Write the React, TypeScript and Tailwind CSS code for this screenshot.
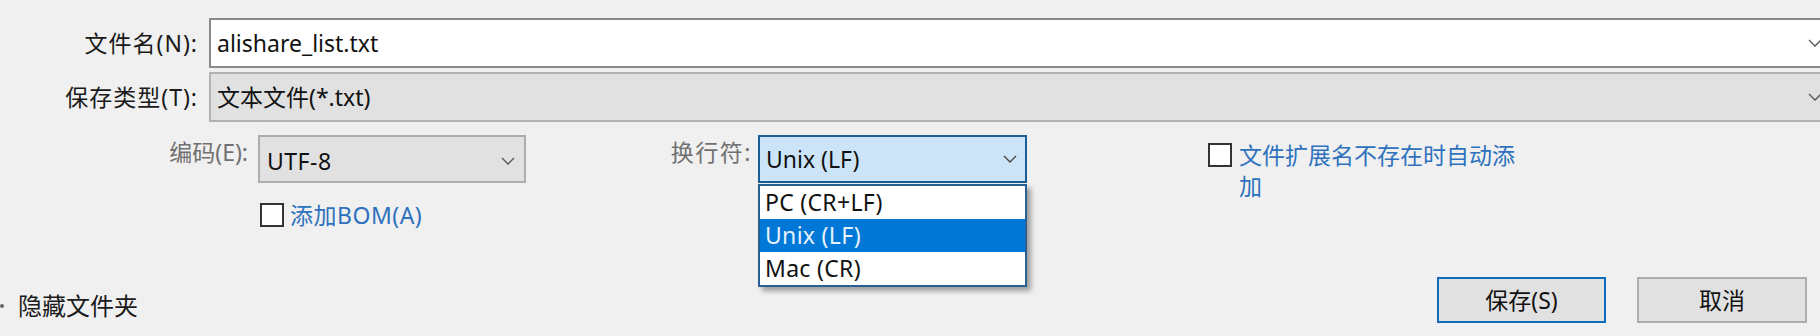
import React from "react";

const font = "font-['Noto_Sans','Noto_Sans_CJK_SC',sans-serif]";

function Chevron({ className = "" }: { className?: string }) {
  return (
    <svg viewBox="0 0 14 8" className={`w-[14px] h-[8px] shrink-0 ${className}`} fill="none" stroke="currentColor" strokeWidth={1.3}>
      <path d="M1 1l6 6 6-6" />
    </svg>
  );
}

function Checkbox() {
  return <span className="w-[24px] h-[24px] shrink-0 border-2 border-[#333] bg-white" />;
}

const options = ["PC (CR+LF)", "Unix (LF)", "Mac (CR)"];

export default function App() {
  return (
    <div className={`w-[1820px] h-[336px] overflow-hidden bg-[#f0f0f0] text-[23px] text-black ${font} flex flex-col pt-[18px]`}>
      {/* file name */}
      <div className="flex items-center h-[50px]">
        <span className="w-[198px] text-right text-[#1a1a1a] tracking-[1px]">文件名(N):</span>
        <div className="ml-[11px] flex-1 -mr-[20px] h-full bg-white border-2 border-[#8a8a8a] flex items-center pl-[6px] text-[#111]">
          alishare_list.txt
          <Chevron className="ml-auto mr-[16px] text-[#555]" />
        </div>
      </div>

      {/* file type */}
      <div className="flex items-center h-[50px] mt-[4px]">
        <span className="w-[198px] text-right text-[#1a1a1a] tracking-[1px]">保存类型(T):</span>
        <div className="ml-[11px] flex-1 -mr-[20px] h-full bg-[#e1e1e1] border-2 border-[#b2b2b2] flex items-center pl-[6px] text-[#111]">
          文本文件(*.txt)
          <Chevron className="ml-auto mr-[16px] text-[#555]" />
        </div>
      </div>

      {/* encoding / line ending / extension */}
      <div className="flex items-start h-[48px] mt-[13px]">
        <span className="w-[248px] text-right text-[#707070] leading-[30px] pt-[2px]">编码(E):</span>
        <div className="ml-[10px] w-[268px] h-full bg-[#e1e1e1] border-2 border-[#adadad] flex items-center pl-[7px] pt-[4px] text-[#111] tracking-[0.5px]">
          UTF-8
          <Chevron className="ml-auto mr-[9px] text-[#555]" />
        </div>
        <span className="w-[226px] text-right text-[#707070] leading-[30px] pt-[2px] tracking-[1.5px]">换行符:</span>
        <div className="ml-[6px] w-[269px] h-full relative">
          <div className="h-full bg-[#cce4f7] border-2 border-[#1c5d96] flex items-center pl-[6px] text-[#111]">
            Unix (LF)
            <Chevron className="ml-auto mr-[8px] text-[#444]" />
          </div>
          <ul className="absolute left-0 top-[49px] w-full bg-white border-2 border-[#2a5f93] shadow-[4px_4px_5px_rgba(0,0,0,0.35)] z-10">
            {options.map((o) => (
              <li
                key={o}
                className={`h-[33px] flex items-center pl-[5px] tracking-[0.3px] ${o === "Unix (LF)" ? "bg-[#0078d7] text-[#e8f2fb]" : "text-[#111]"}`}
              >
                {o}
              </li>
            ))}
          </ul>
        </div>
        <div className="ml-[181px] mt-[8px] flex items-start gap-[7px]">
          <Checkbox />
          <span className="leading-[31px] text-[#2e72bd] -mt-[3px]">
            文件扩展名不存在时自动添
            <br />加
          </span>
        </div>
      </div>

      {/* BOM */}
      <div className="flex items-center mt-[19px] pl-[260px] gap-[6px]">
        <Checkbox />
        <span className="text-[#2e72bd] leading-[26px] tracking-[0.5px]">添加BOM(A)</span>
      </div>

      {/* bottom */}
      <div className="flex items-center h-[46px] mt-[49px]">
        <span className="w-[4px] h-[4px] rounded-full bg-[#666] mt-[12px]" />
        <span className="ml-[14px] mt-[12px] text-[24px] text-[#1a1a1a]">隐藏文件夹</span>
        <div className="ml-auto mr-[13px] flex gap-[31px] h-full">
          <button className="w-[169px] h-full bg-[#e1e1e1] border-2 border-[#0f6cbd] text-[#111]">保存(S)</button>
          <button className="w-[170px] h-full bg-[#e1e1e1] border-2 border-[#adadad] text-[#111]">取消</button>
        </div>
      </div>
    </div>
  );
}
